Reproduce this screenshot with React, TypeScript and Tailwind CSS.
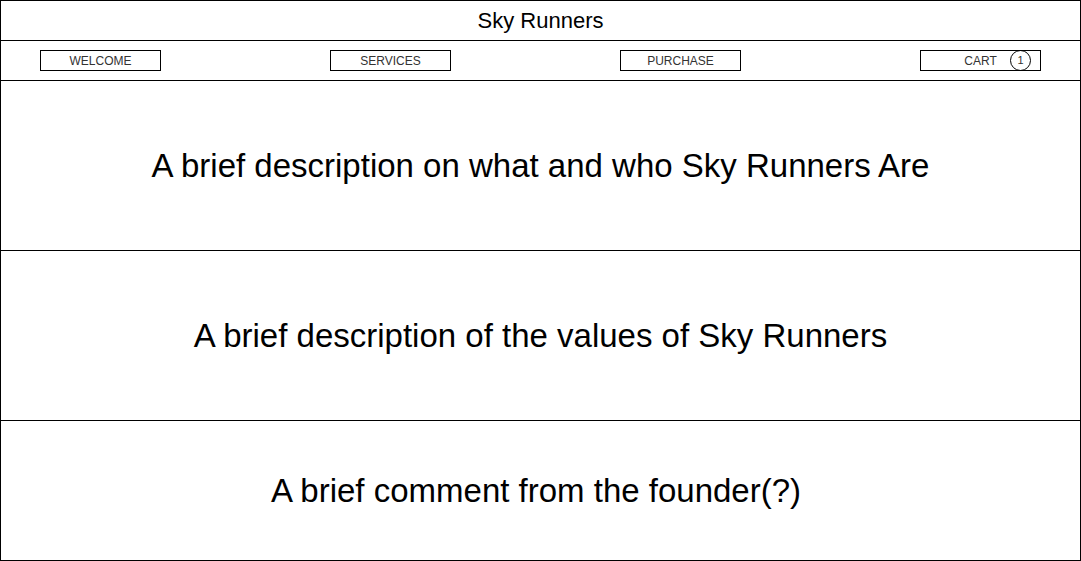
import React from "react";

const NavButton: React.FC<{ label: string; className?: string; children?: React.ReactNode }> = ({ label, className, children }) => (
  <div className={`relative flex h-[21px] w-[121px] items-center justify-center border border-black text-[12px] text-[#333] ${className ?? ""}`}>
    {label}
    {children}
  </div>
);

const App: React.FC = () => {
  return (
    <div
      className="flex h-[561px] w-[1081px] flex-col border border-black bg-white text-black"
      style={{ fontFamily: '"Liberation Sans", Arial, sans-serif' }}
    >
      {/* title */}
      <div className="flex h-[39px] items-center justify-center text-[22px]">Sky Runners</div>

      {/* nav */}
      <div className="flex h-[41px] items-center border-y border-black pl-[39px]">
        <NavButton label="WELCOME" />
        <NavButton label="SERVICES" className="ml-[169px]" />
        <NavButton label="PURCHASE" className="ml-[169px]" />
        <NavButton label="CART" className="ml-[179px]">
          <span className="absolute left-[89px] top-[-1px] flex h-[21px] w-[21px] items-center justify-center rounded-full border border-black text-[11px] text-[#333]">
            1
          </span>
        </NavButton>
      </div>

      {/* sections */}
      <div className="flex h-[170px] items-center justify-center border-b border-black text-[33px]">
        A brief description on what and who Sky Runners Are
      </div>
      <div className="flex h-[170px] items-center justify-center border-b border-black text-[33px]">
        A brief description of the values of Sky Runners
      </div>
      <div className="flex flex-1 items-center justify-center pr-[9px] text-[33px]">
        A brief comment from the founder(?)
      </div>
    </div>
  );
};

export default App;
